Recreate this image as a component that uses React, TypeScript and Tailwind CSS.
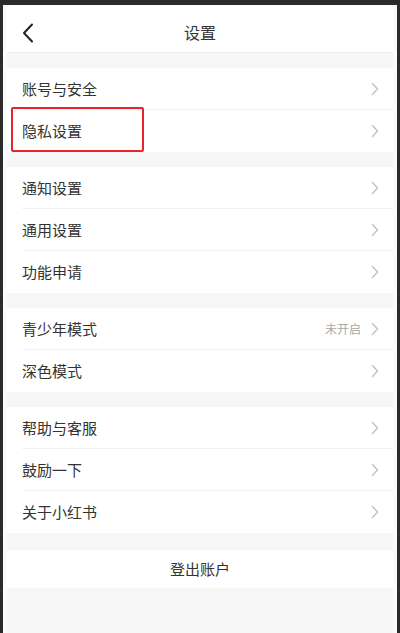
import React from "react";

const font = { fontFamily: '"Noto Sans CJK SC", "Noto Sans", sans-serif' };

function Chevron() {
  return (
    <svg width="8" height="14" viewBox="0 0 8 14" className="shrink-0">
      <path d="M1.5 1.5 L6.5 7 L1.5 12.5" fill="none" stroke="#c4c4c4" strokeWidth="1.5" strokeLinecap="round" strokeLinejoin="round" />
    </svg>
  );
}

function Row({ label, value, last, highlight }: { label: string; value?: string; last?: boolean; highlight?: boolean }) {
  return (
    <div className="relative h-[42px] flex items-center pl-[15px] pr-[14px] bg-white">
      <span className="flex-1 text-[15px] text-[#333]">{label}</span>
      {value && <span className="text-[12px] text-[#a8a8a8] mr-[10px]">{value}</span>}
      <Chevron />
      {!last && <div className="absolute left-[15px] right-0 bottom-0 h-px bg-[#f2f2f2]" />}
      {highlight && (
        <div className="absolute left-[4px] top-[-3px] w-[133px] h-[45px] border-2 border-[#e8232b] rounded-[2px]" />
      )}
    </div>
  );
}

function Gap({ h = "h-[15px]" }: { h?: string }) {
  return <div className={`${h} bg-[#f6f6f6]`} />;
}

export default function App() {
  return (
    <div className="w-[400px] h-[633px] bg-[#2b2b2b] pt-[5px] pl-[3px] pr-[3px] overflow-hidden" style={font}>
      <div className="h-full bg-[#f6f6f6] border-l-[4px] border-r-[4px] border-[#fbfbfb] flex flex-col">
        <div className="h-[48px] bg-white relative flex items-center justify-center border-b border-[#eeeeee]">
          <svg width="12" height="20" viewBox="0 0 12 20" className="absolute left-[15px] top-[18px]">
            <path d="M10 1.5 L2 10 L10 18.5" fill="none" stroke="#222" strokeWidth="2" strokeLinecap="round" strokeLinejoin="round" />
          </svg>
          <span className="text-[16px] text-[#333] mt-[6px]">设置</span>
        </div>
        <Gap h="h-[15px]" />
        <Row label="账号与安全" />
        <Row label="隐私设置" last highlight />
        <Gap />
        <Row label="通知设置" />
        <Row label="通用设置" />
        <Row label="功能申请" last />
        <Gap />
        <Row label="青少年模式" value="未开启" />
        <Row label="深色模式" last />
        <Gap />
        <Row label="帮助与客服" />
        <Row label="鼓励一下" />
        <Row label="关于小红书" last />
        <Gap h="h-[17px]" />
        <div className="h-[38px] bg-white flex items-center justify-center text-[15px] text-[#333]">登出账户</div>
        <div className="flex-1 bg-[#f6f6f6]" />
      </div>
    </div>
  );
}
